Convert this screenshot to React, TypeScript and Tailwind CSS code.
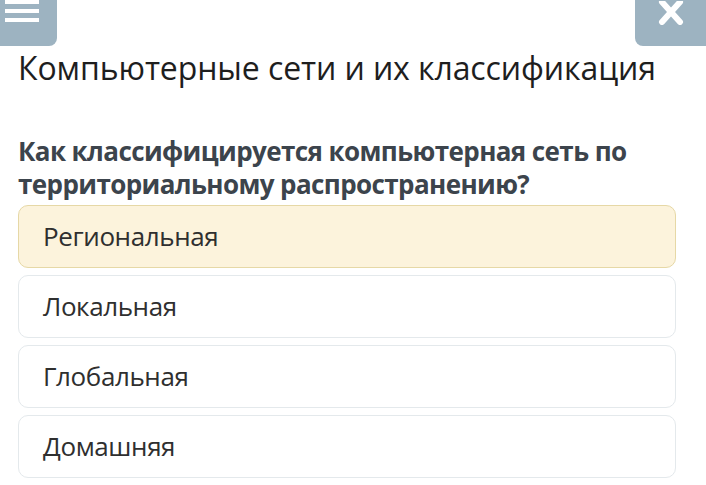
const options = ["Региональная", "Локальная", "Глобальная", "Домашняя"];

export default function App() {
  return (
    <div
      className="w-[706px] h-[485px] bg-white overflow-hidden text-[#222]"
      style={{ fontFamily: '"Open Sans", "Noto Sans", sans-serif' }}
    >
      <div className="flex justify-between h-[46px]">
        <button className="w-[57px] h-[46px] bg-[#9db3c1] rounded-br-[8px] flex items-start pl-[5px]">
          <svg width="34" height="23" viewBox="0 0 34 23">
            <rect x="0" y="0" width="34" height="4" fill="#fff" />
            <rect x="0" y="9" width="34" height="4" fill="#fff" />
            <rect x="0" y="18" width="34" height="4" fill="#fff" />
          </svg>
        </button>
        <button className="w-[71px] h-[46px] bg-[#9db3c1] rounded-bl-[8px] flex justify-center pt-[1px]">
          <svg width="26" height="24" viewBox="0 0 26 24">
            <path d="M4 1 L22 21 M22 1 L4 21" stroke="#fff" strokeWidth="6" strokeLinecap="round" />
          </svg>
        </button>
      </div>

      <h1 className="px-[18px] mt-[1px] text-[32px] leading-[42px] font-normal tracking-[-0.1px] text-[#1e1e1e]">
        Компьютерные сети и их классификация
      </h1>

      <p className="px-[18px] mt-[46px] text-[26px] leading-[33px] font-bold tracking-[-0.6px] text-[#3c444c]">
        Как классифицируется компьютерная сеть по территориальному распространению?
      </p>

      <div className="flex flex-col gap-[7px] px-[18px] mt-[4px] w-[694px]">
        {options.map((o, i) => (
          <div
            key={o}
            className={
              i === 0
                ? "h-[63px] rounded-[10px] border border-[#e6d8a6] bg-[#fcf3dc] flex items-center pl-[24px] text-[26px] tracking-[-0.4px] text-[#2f2f2f]"
                : "h-[63px] rounded-[10px] border border-[#e4e9ec] bg-white flex items-center pl-[24px] text-[26px] tracking-[-0.4px] text-[#2f2f2f]"
            }
          >
            {o}
          </div>
        ))}
      </div>
    </div>
  );
}
